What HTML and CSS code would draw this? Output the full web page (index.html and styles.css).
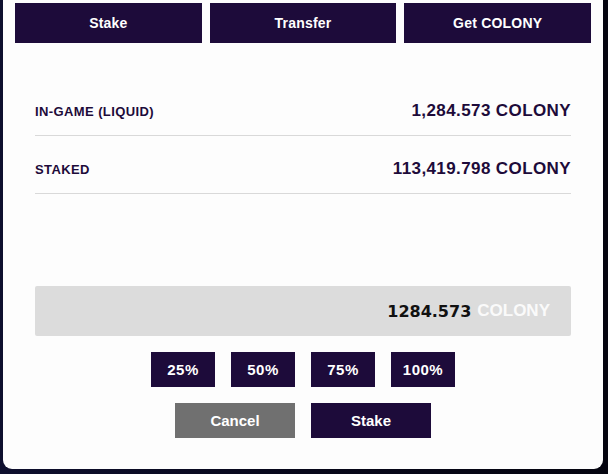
FILE: index.html
```html
<!DOCTYPE html>
<html>
<head>
<meta charset="utf-8">
<link rel="stylesheet" href="styles.css">
</head>
<body>
<div class="panel">
  <div class="tabs">
    <button class="btn tab">Stake</button>
    <button class="btn tab">Transfer</button>
    <button class="btn tab">Get COLONY</button>
  </div>
  <div class="rows">
    <div class="row"><span class="label">IN-GAME (LIQUID)</span><span class="value">1,284.573 COLONY</span></div>
    <div class="row"><span class="label">STAKED</span><span class="value">113,419.798 COLONY</span></div>
  </div>
  <div class="amount"><span class="num">1284.573</span><span class="unit">COLONY</span></div>
  <div class="pcts">
    <button class="btn pct">25%</button>
    <button class="btn pct">50%</button>
    <button class="btn pct">75%</button>
    <button class="btn pct">100%</button>
  </div>
  <div class="actions">
    <button class="btn act cancel">Cancel</button>
    <button class="btn act">Stake</button>
  </div>
</div>
</body>
</html>
```
FILE: styles.css
```css
html, body {
  margin: 0;
  padding: 0;
  height: 474px;
  overflow: hidden;
}
body {
  background: linear-gradient(90deg, #0e0f2e 0%, #07071a 50%, #050510 100%);
  font-family: "Liberation Sans", Arial, sans-serif;
}
.panel {
  margin: 0 5px 0 3px;
  height: 469px;
  box-sizing: border-box;
  background: #fdfdfd;
  border-radius: 0 0 9px 9px;
  padding: 3px 12px 0 12px;
}
.btn {
  border: 0;
  margin: 0;
  padding: 0;
  background: #1d0b3a;
  color: #fff;
  font-family: "Liberation Sans", Arial, sans-serif;
  font-weight: bold;
  display: flex;
  align-items: center;
  justify-content: center;
}
.tabs {
  display: flex;
  gap: 8px;
}
.tab {
  flex: 1;
  height: 40px;
  font-size: 14px;
  letter-spacing: 0.2px;
}
.rows {
  margin: 35px 20px 0 20px;
}
.row {
  display: flex;
  justify-content: space-between;
  align-items: center;
  height: 18px;
  padding: 24px 0 15px 0;
  border-bottom: 1px solid #d9d9d9;
  color: #1d0b3a;
  font-weight: bold;
}
.label {
  font-size: 13px;
  letter-spacing: 0.4px;
}
.value {
  font-size: 17px;
  letter-spacing: 0.4px;
}
.amount {
  margin: 92px 20px 0 20px;
  height: 50px;
  background: #dcdcdc;
  border-radius: 2px;
  display: flex;
  align-items: center;
  justify-content: flex-end;
  padding-right: 21px;
  font-weight: bold;
  font-size: 17px;
  gap: 6px;
}
.num {
  color: #111;
  font-family: "DejaVu Sans", sans-serif;
  font-size: 16px;
}
.unit {
  color: #fafafa;
}
.pcts {
  display: flex;
  justify-content: center;
  gap: 16px;
  margin-top: 16px;
}
.pct {
  width: 64px;
  height: 35px;
  font-size: 15px;
  letter-spacing: 0.5px;
}
.actions {
  display: flex;
  justify-content: center;
  gap: 16px;
  margin-top: 16px;
}
.act {
  width: 120px;
  height: 35px;
  font-size: 15px;
}
.cancel {
  background: #707070;
}
```
